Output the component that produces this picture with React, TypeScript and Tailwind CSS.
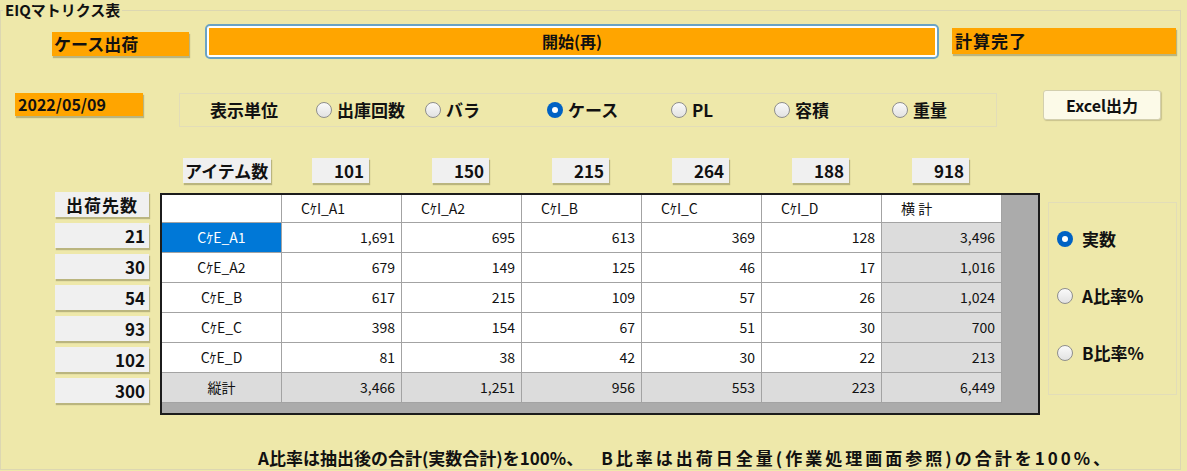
import React from 'react';

const FONT = '"Noto Sans CJK JP", "Noto Sans", sans-serif';

const ITEM_COUNTS = ['101', '150', '215', '264', '188', '918'];
const DEST_COUNTS = ['21', '30', '54', '93', '102', '300'];

const HEADERS = ['CｹI_A1', 'CｹI_A2', 'CｹI_B', 'CｹI_C', 'CｹI_D', '横 計'];
const ROWS = [
  ['CｹE_A1', '1,691', '695', '613', '369', '128', '3,496'],
  ['CｹE_A2', '679', '149', '125', '46', '17', '1,016'],
  ['CｹE_B', '617', '215', '109', '57', '26', '1,024'],
  ['CｹE_C', '398', '154', '67', '51', '30', '700'],
  ['CｹE_D', '81', '38', '42', '30', '22', '213'],
  ['縦計', '3,466', '1,251', '956', '553', '223', '6,449'],
];

// display-unit radios: [label, width of slot]
const UNITS: [string, number][] = [
  ['出庫回数', 109],
  ['バラ', 122],
  ['ケース', 124],
  ['PL', 103],
  ['容積', 118],
  ['重量', 80],
];

const RadioDot: React.FC<{ checked?: boolean }> = ({ checked }) =>
  checked ? (
    <span className="w-[16px] h-[16px] rounded-full bg-[#0062c4] flex items-center justify-center shrink-0">
      <span className="w-[6px] h-[6px] rounded-full bg-white" />
    </span>
  ) : (
    <span className="w-[16px] h-[16px] rounded-full border border-[#8e8e8e] bg-gradient-to-b from-[#fafafa] to-[#e2e2e2] shrink-0" />
  );

const Radio: React.FC<{ label: string; checked?: boolean; width?: number; gap?: string }> = ({
  label,
  checked,
  width,
  gap = 'gap-[5px]',
}) => (
  <div className={`flex items-center ${gap} h-[20px]`} style={width ? { width } : undefined}>
    <RadioDot checked={checked} />
    <span className="text-[17px] font-bold leading-[20px] text-[#111]">{label}</span>
  </div>
);

const GrayBox: React.FC<{ children: React.ReactNode; className?: string }> = ({ children, className = '' }) => (
  <div
    className={`h-[25px] bg-[#f0f0f0] shadow-[1px_2px_1px_rgba(90,85,50,0.35)] text-[17px] font-bold leading-[25px] text-[#111] ${className}`}
  >
    {children}
  </div>
);

export default function App() {
  return (
    <div className="w-[1187px] h-[471px] bg-[#eee8aa] overflow-hidden text-[#111]" style={{ fontFamily: FONT }}>
      <fieldset className="w-[1181px] h-[470px] border border-[#dcd7b2] ml-0">
        <legend className="ml-[2px] px-[2px] text-[15px] font-bold leading-[20px]">EIQマトリクス表</legend>

        {/* status row */}
        <div className="flex items-start mt-[4px] h-[35px]">
          <div className="ml-[51px] mt-[8px] w-[137px] h-[24px] bg-[#ffa500] shadow-[1px_2px_1px_rgba(90,85,50,0.35)] pl-[2px] text-[17px] font-bold leading-[24px]">
            ケース出荷
          </div>
          <button className="ml-[16px] w-[734px] h-[35px] rounded-[5px] border-2 border-[#6aa3c5] bg-white p-[2px]">
            <div className="w-full h-full bg-[#ffa500] text-[16px] font-bold leading-[27px] text-center">開始(再)</div>
          </button>
          <div className="ml-[13px] mt-[4px] w-[224px] h-[26px] bg-[#ffa500] shadow-[1px_2px_1px_rgba(90,85,50,0.35)] pl-[3px] text-[17px] font-bold leading-[26px] tracking-[1px]">
            計算完了
          </div>
        </div>

        {/* date / unit row */}
        <div className="flex items-start mt-[34px] h-[34px]">
          <div className="ml-[14px] w-[128px] h-[23px] bg-[#ffa500] shadow-[1px_2px_1px_rgba(90,85,50,0.35)] pl-[3px] text-[16px] font-bold leading-[23px]">
            2022/05/09
          </div>
          <div className="ml-[36px] w-[818px] h-[34px] border border-[#e2ddb8] flex items-center">
            <span className="ml-[30px] w-[106px] text-[17px] font-bold leading-[20px]">表示単位</span>
            {UNITS.map(([u, w]) => (
              <Radio key={u} label={u} width={w} checked={u === 'ケース'} />
            ))}
          </div>
          <button className="ml-[46px] -mt-[3px] w-[118px] h-[30px] rounded-[3px] border border-[#d3cfae] bg-[#fcfae8] shadow-[1px_1px_1px_rgba(90,85,50,0.25)] text-[16px] font-bold leading-[26px]">
            Excel出力
          </button>
        </div>

        {/* item counts */}
        <div className="flex items-start mt-[31px] h-[25px]">
          <GrayBox className="ml-[182px] w-[88px] pl-[2px]">アイテム数</GrayBox>
          <div className="flex gap-[63px] ml-[41px]">
            {ITEM_COUNTS.map((n) => (
              <GrayBox key={n} className="w-[57px] text-right pr-[5px]">
                {n}
              </GrayBox>
            ))}
          </div>
        </div>

        {/* matrix */}
        <div className="flex items-start mt-[9px]">
          <div className="ml-[54px] w-[94px] flex flex-col gap-[6px]">
            <GrayBox className="text-center tracking-[1px]">出荷先数</GrayBox>
            {DEST_COUNTS.map((n) => (
              <GrayBox key={n} className="text-right pr-[4px]">
                {n}
              </GrayBox>
            ))}
          </div>

          <div className="ml-[11px] mt-[1px] w-[880px] h-[222px] border-2 border-[#1c1c1c] bg-[#ababab] flex flex-col">
            <div className="flex h-[28px]">
              <div className="w-[120px] bg-white border-r border-b border-[#a3a3a3]" />
              {HEADERS.map((h) => (
                <div
                  key={h}
                  className="w-[120px] bg-white border-r border-b border-[#a3a3a3] pl-[19px] text-[14px] leading-[27px] text-[#111]"
                >
                  {h}
                </div>
              ))}
            </div>
            {ROWS.map((row, ri) => {
              const total = ri === ROWS.length - 1;
              return (
                <div key={row[0]} className="flex h-[30px]">
                  {row.map((cell, ci) => {
                    const selected = ri === 0 && ci === 0;
                    const gray = total || ci === row.length - 1;
                    const bg = selected
                      ? 'bg-[#0078d7] text-white'
                      : gray
                        ? 'bg-[#dcdcdc] text-[#111]'
                        : 'bg-white text-[#111]';
                    return (
                      <div
                        key={ci}
                        className={`w-[120px] border-r border-b border-[#a3a3a3] text-[14px] leading-[29px] ${bg} ${
                          ci === 0 ? 'text-center' : 'text-right pr-[6px]'
                        }`}
                      >
                        {cell}
                      </div>
                    );
                  })}
                </div>
              );
            })}
          </div>

          <div className="ml-[8px] mt-[10px] w-[129px] h-[193px] border border-[#e2ddb8] flex flex-col gap-[37px] pt-[26px] pl-[8px]">
            <Radio label="実数" checked gap="gap-[9px]" />
            <Radio label="A比率%" gap="gap-[9px]" />
            <Radio label="B比率%" gap="gap-[9px]" />
          </div>
        </div>

        {/* footnote */}
        <div className="flex mt-[33px] text-[17px] font-bold leading-[20px]">
          <span className="ml-[257px]">A比率は抽出後の合計(実数合計)を100%、</span>
          <span className="ml-[18px] tracking-[3px]">B比率は出荷日全量(作業処理画面参照)の合計を100%、</span>
        </div>
      </fieldset>
    </div>
  );
}
